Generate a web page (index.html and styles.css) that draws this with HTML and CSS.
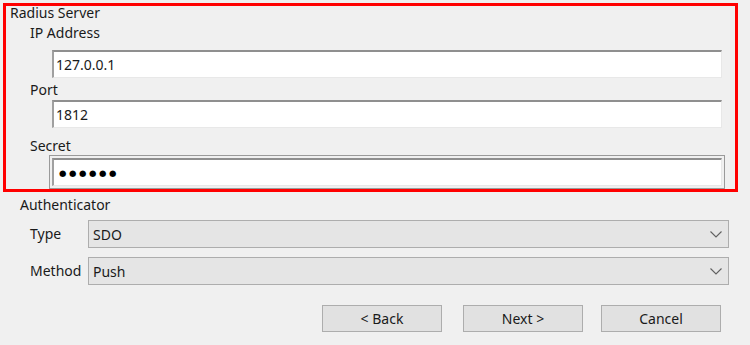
FILE: index.html
```html
<!DOCTYPE html>
<html>
<head>
<meta charset="utf-8">
<link rel="stylesheet" href="styles.css">
</head>
<body>
<div class="page">
  <div class="group">
    <div class="group-title">Radius Server</div>
    <div class="label lbl-ip">IP Address</div>
    <div class="textbox tb-ip"><span class="val">127.0.0.1</span></div>
    <div class="label lbl-port">Port</div>
    <div class="textbox tb-port"><span class="val">1812</span></div>
    <div class="label lbl-secret">Secret</div>
    <div class="focus-frame">
      <div class="textbox tb-secret"><span class="dots">●●●●●●</span></div>
    </div>
  </div>
  <div class="section-title">Authenticator</div>
  <div class="row row-type">
    <div class="row-label">Type</div>
    <div class="combo"><span class="combo-val">SDO</span>
      <svg class="chev" width="12" height="7" viewBox="0 0 12 7"><polyline points="0.5,0.5 6,6 11.5,0.5" fill="none" stroke="#606060" stroke-width="1.1"/></svg>
    </div>
  </div>
  <div class="row row-method">
    <div class="row-label">Method</div>
    <div class="combo"><span class="combo-val">Push</span>
      <svg class="chev" width="12" height="7" viewBox="0 0 12 7"><polyline points="0.5,0.5 6,6 11.5,0.5" fill="none" stroke="#606060" stroke-width="1.1"/></svg>
    </div>
  </div>
  <div class="buttons">
    <div class="btn btn-back">&lt; Back</div>
    <div class="btn btn-next">Next &gt;</div>
    <div class="btn btn-cancel">Cancel</div>
  </div>
</div>
</body>
</html>
```
FILE: styles.css
```css
html, body {
  margin: 0;
  padding: 0;
  background: #f0f0f0;
}
body {
  width: 750px;
  height: 345px;
  overflow: hidden;
  font-family: "Noto Sans", "Open Sans", sans-serif;
  font-size: 14px;
  color: #1a1a1a;
}
.page {
  display: flex;
  flex-direction: column;
  padding-top: 3px;
}
.group {
  margin-left: 3px;
  width: 729px;
  height: 183px;
  border: 3px solid #ff0000;
  display: flex;
  flex-direction: column;
  align-items: flex-start;
}
.group-title {
  padding-left: 4px;
  line-height: 14px;
  height: 14px;
}
.label {
  padding-left: 24px;
  line-height: 16px;
  height: 16px;
}
.lbl-ip { margin-top: 5px; }
.lbl-port { margin-top: 4px; }
.lbl-secret { margin-top: 10px; }
.textbox {
  box-sizing: border-box;
  height: 28px;
  background: #fff;
  border-style: solid;
  border-width: 2px 1px 1px 2px;
  border-color: #8f8f8f #e8e8e8 #e8e8e8 #a0a0a0;
  display: flex;
  align-items: center;
  padding-left: 2px;
}
.tb-ip {
  margin-top: 9px;
  margin-left: 46px;
  width: 670px;
}
.tb-port {
  margin-top: 2px;
  margin-left: 46px;
  width: 670px;
}
.focus-frame {
  margin-top: 1px;
  margin-left: 43px;
  width: 676px;
  height: 34px;
  box-sizing: border-box;
  border: 1px solid #9a9a9a;
  padding: 2px;
}
.tb-secret {
  width: 100%;
  height: 28px;
  padding-left: 5px;
}
.dots {
  font-family: "DejaVu Sans", sans-serif;
  font-size: 8.5px;
  letter-spacing: 2.6px;
  color: #000;
}
.section-title {
  margin-top: 5px;
  padding-left: 20px;
  line-height: 16px;
  height: 16px;
}
.row {
  display: flex;
  align-items: center;
  height: 28px;
}
.row-type { margin-top: 7px; }
.row-method { margin-top: 9px; }
.row-label {
  width: 58px;
  padding-left: 30px;
  line-height: 16px;
}
.combo {
  box-sizing: border-box;
  width: 641px;
  height: 28px;
  background: #e5e5e5;
  border: 1px solid #adadad;
  display: flex;
  align-items: center;
  justify-content: space-between;
  padding: 0 6px 0 4px;
}
.chev { display: block; }
.buttons {
  display: flex;
  margin-top: 20px;
  padding-left: 322px;
  gap: 21px;
}
.btn {
  box-sizing: border-box;
  width: 120px;
  height: 27px;
  background: #e1e1e1;
  border: 1px solid #adadad;
  display: flex;
  align-items: center;
  justify-content: center;
}
.btn-cancel { margin-left: -3px; }
```
